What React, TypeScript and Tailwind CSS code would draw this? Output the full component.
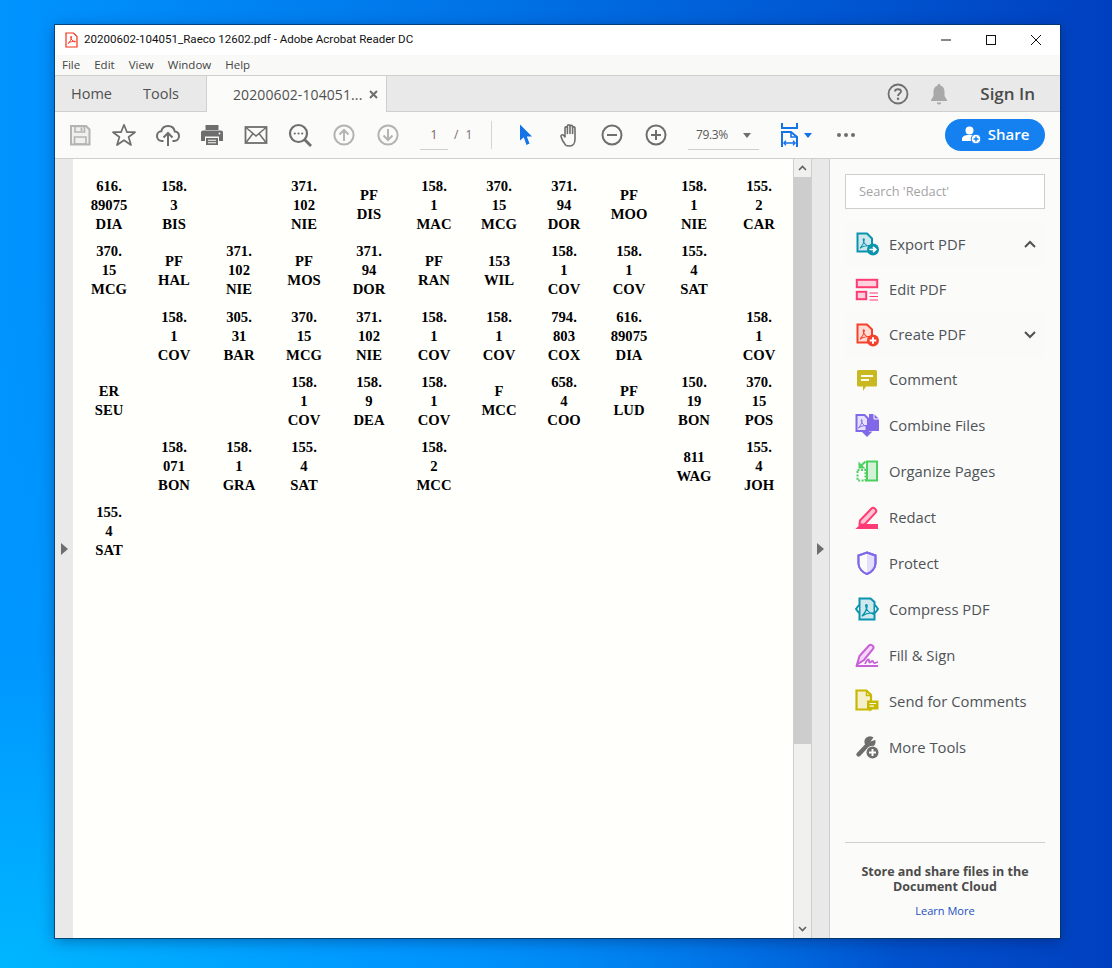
import type { ReactNode } from "react";

const UI = { fontFamily: '"Open Sans", "Noto Sans", sans-serif' };

const doc: string[][] = [
  ["616.|89075|DIA", "158.|3|BIS", "", "371.|102|NIE", "PF|DIS", "158.|1|MAC", "370.|15|MCG", "371.|94|DOR", "PF|MOO", "158.|1|NIE", "155.|2|CAR"],
  ["370.|15|MCG", "PF|HAL", "371.|102|NIE", "PF|MOS", "371.|94|DOR", "PF|RAN", "153|WIL", "158.|1|COV", "158.|1|COV", "155.|4|SAT", ""],
  ["", "158.|1|COV", "305.|31|BAR", "370.|15|MCG", "371.|102|NIE", "158.|1|COV", "158.|1|COV", "794.|803|COX", "616.|89075|DIA", "", "158.|1|COV"],
  ["ER|SEU", "", "", "158.|1|COV", "158.|9|DEA", "158.|1|COV", "F|MCC", "658.|4|COO", "PF|LUD", "150.|19|BON", "370.|15|POS"],
  ["", "158.|071|BON", "158.|1|GRA", "155.|4|SAT", "", "158.|2|MCC", "", "", "", "811|WAG", "155.|4|JOH"],
  ["155.|4|SAT"],
];

const Svg = ({ children, size = 24 }: { children: ReactNode; size?: number }) => (
  <svg width={size} height={size} viewBox="0 0 24 24" fill="none">
    {children}
  </svg>
);

const PdfMark = ({ color, x = 0, y = 0, s = 1 }: { color: string; x?: number; y?: number; s?: number }) => (
  <path
    transform={`translate(${x} ${y}) scale(${s})`}
    d="M2 12 C4 10 6 7 6.5 3 C6.6 1.5 5 1.5 5.2 3 C5.6 6 8 9.5 12 10.5 C13.5 10.8 13.5 9.4 12 9.4 C8 9.4 4 10.5 1.6 12.6"
    stroke={color}
    strokeWidth="1.2"
  />
);

const toolIcons: Record<string, ReactNode> = {
  export: (
    <Svg>
      <path d="M2.5 1.5H12L17 6.5V19.5H2.5Z" fill="#cfe8ee" stroke="#0a93ad" strokeWidth="2" />
      <PdfMark color="#0a93ad" x={3.5} y={5} s={0.9} />
      <circle cx="18" cy="17.5" r="6" fill="#0a93ad" />
      <path d="M14.5 17.5H20M18 15L20.8 17.5L18 20" stroke="#fff" strokeWidth="1.7" />
    </Svg>
  ),
  edit: (
    <Svg>
      <rect x="1.8" y="1.8" width="20.4" height="7.4" fill="#ffd0dd" stroke="#ff3b73" strokeWidth="2" />
      <rect x="1.8" y="13.8" width="9.4" height="7.4" fill="#ffd0dd" stroke="#ff3b73" strokeWidth="2" />
      <path d="M14.5 15H23M14.5 18.5H23M14.5 22H23" stroke="#ff3b73" strokeWidth="1.2" />
    </Svg>
  ),
  create: (
    <Svg>
      <path d="M2.5 1.5H12L17 6.5V19.5H2.5Z" fill="#ffdcd6" stroke="#f5402c" strokeWidth="2" />
      <PdfMark color="#f5402c" x={3.5} y={5} s={0.9} />
      <circle cx="18" cy="17.5" r="6" fill="#f5402c" />
      <path d="M18 14.2V20.8M14.7 17.5H21.3" stroke="#fff" strokeWidth="2" />
    </Svg>
  ),
  comment: (
    <Svg>
      <path d="M3.5 2H20.5Q22 2 22 3.5V17Q22 18.5 20.5 18.5H11L8 23V18.5H3.5Q2 18.5 2 17V3.5Q2 2 3.5 2Z" fill="#c9b81f" />
      <path d="M6 8H18M6 12H14" stroke="#fbfbf0" strokeWidth="1.8" />
    </Svg>
  ),
  combine: (
    <Svg>
      <path d="M1.5 2H9.5L13 5.5V18H1.5Z" fill="#e6e1fb" stroke="#8068e8" strokeWidth="2" />
      <PdfMark color="#8068e8" x={2} y={5} s={0.8} />
      <path d="M14 1H19L24 6V18H14Z" fill="#8068e8" />
      <path d="M19 1V6H24" stroke="#fff" strokeWidth="1" />
      <path d="M12 12V20" stroke="#8068e8" strokeWidth="3" />
      <path d="M6.5 18.5H17.5L12 24Z" fill="#8068e8" />
    </Svg>
  ),
  organize: (
    <Svg>
      <rect x="12" y="2.5" width="10" height="19" fill="#d4f2d8" stroke="#4cd060" strokeWidth="2" />
      <rect x="2.5" y="11" width="8" height="10.5" stroke="#4cd060" strokeWidth="2" strokeDasharray="2 1.4" />
      <path d="M10.5 2.5L6 6.8" stroke="#4cd060" strokeWidth="2" />
      <path d="M3.5 2.5V9.5H10.5Z" fill="#4cd060" />
    </Svg>
  ),
  redact: (
    <Svg>
      <path d="M5 15.5L16.5 3.5Q18 2 19.8 3.6L20.6 4.4Q22 6 20.6 7.6L9.5 19.5H4.5Z" fill="#ffc4d4" stroke="#ff3b73" strokeWidth="2" />
      <path d="M0.5 24L5.5 19H23V24Z" fill="#ff3b73" />
    </Svg>
  ),
  protect: (
    <Svg>
      <path d="M12 1.5L20.5 4.5V12.5C20.5 17.5 16 21.5 12 23C8 21.5 3.5 17.5 3.5 12.5V4.5Z" fill="#e3dffa" stroke="#8068e8" strokeWidth="2" />
      <path d="M12 2.5V22C8 21 4.5 17 4.5 12.5V5.2Z" fill="#fbfbf9" />
      <path d="M12 1.5L20.5 4.5V12.5C20.5 17.5 16 21.5 12 23C8 21.5 3.5 17.5 3.5 12.5V4.5Z" stroke="#8068e8" strokeWidth="2" />
    </Svg>
  ),
  compress: (
    <Svg>
      <path d="M4.5 1.5H15.5L19.5 5V22.5H4.5Z" fill="#cfe8ee" stroke="#0a93ad" strokeWidth="2" />
      <PdfMark color="#0a93ad" x={5} y={5.5} s={1.1} />
      <path d="M4 8L1 12L4 16M20 8L23 12L20 16" stroke="#0a93ad" strokeWidth="2" fill="#fbfbf9" />
    </Svg>
  ),
  fill: (
    <Svg>
      <path d="M2 21.5L4.5 13L14 2.5Q15.5 1 17 2.3L17.8 3Q19.2 4.4 18 6L9 17Z" fill="#f4d8f8" stroke="#c860d8" strokeWidth="2" />
      <path d="M1 23H23M10 21C12 16 14.5 15 14 18C14 21 16 19 17 18C18 17 18.5 21 20 20L23 19" stroke="#c860d8" strokeWidth="1.8" />
    </Svg>
  ),
  send: (
    <Svg>
      <path d="M1.5 1.5H11.5L16 6V20.5H1.5Z" fill="#f4f0cc" stroke="#c8b800" strokeWidth="2.2" />
      <path d="M11.5 1.5V6.5H16" stroke="#c8b800" strokeWidth="1.5" />
      <path d="M12 11.5H23.5V20.5H16L14.5 23V20.5H12Z" fill="#c8b800" />
      <path d="M14.5 14.5H21M14.5 17.2H19" stroke="#fbfbf0" strokeWidth="1.2" />
    </Svg>
  ),
  more: (
    <Svg>
      <path d="M3.5 19.5L13 9.5" stroke="#6e6e6e" strokeWidth="4.4" strokeLinecap="round" />
      <circle cx="15" cy="6.8" r="5.6" fill="#6e6e6e" />
      <path d="M15.5 6.5L20 0.5H23V4Z" fill="#fbfbf9" />
      <circle cx="17.5" cy="17.5" r="6.8" fill="#fbfbf9" />
      <circle cx="17.5" cy="17.5" r="6" fill="#6e6e6e" />
      <path d="M17.5 14V21M14 17.5H21" stroke="#fff" strokeWidth="1.9" />
    </Svg>
  ),
};

const tools = [
  { key: "export", label: "Export PDF", h: "h-[46px]", chevron: "up" },
  { key: "edit", label: "Edit PDF", h: "h-[45px]" },
  { key: "create", label: "Create PDF", h: "h-[45px]", chevron: "down" },
  { key: "comment", label: "Comment", h: "h-[45px]" },
  { key: "combine", label: "Combine Files", h: "h-[46px]" },
  { key: "organize", label: "Organize Pages", h: "h-[46px]" },
  { key: "redact", label: "Redact", h: "h-[46px]" },
  { key: "protect", label: "Protect", h: "h-[46px]" },
  { key: "compress", label: "Compress PDF", h: "h-[46px]" },
  { key: "fill", label: "Fill & Sign", h: "h-[46px]" },
  { key: "send", label: "Send for Comments", h: "h-[46px]" },
  { key: "more", label: "More Tools", h: "h-[46px]" },
];

const G = "#6e6e6e";
const L = "#b4b4b4";

const Slot = ({ children, w = "w-11" }: { children: ReactNode; w?: string }) => (
  <div className={`${w} h-full flex items-center justify-center shrink-0`}>{children}</div>
);

const CircleArrow = ({ dir }: { dir: "up" | "down" }) => (
  <Svg>
    <circle cx="12" cy="12" r="9.6" stroke={L} strokeWidth="2" />
    {dir === "up" ? (
      <path d="M12 18V7M7.5 11.5L12 7L16.5 11.5" stroke={L} strokeWidth="2" />
    ) : (
      <path d="M12 6V17M7.5 12.5L12 17L16.5 12.5" stroke={L} strokeWidth="2" />
    )}
  </Svg>
);

const Toolbar = () => (
  <div className="h-[47px] flex items-center pl-[3px] bg-[#fbfbf9] border-b border-[#cfcfcd] shrink-0">
    <Slot>
      <Svg>
        <path d="M3 3H18L21.5 6.5V21.5H3Z" fill="#f0f0ee" stroke={L} strokeWidth="2" />
        <path d="M7 3.5H16.5V9H7Z" stroke={L} strokeWidth="1.6" />
        <path d="M13.5 4.5V8" stroke={L} strokeWidth="1.8" />
        <path d="M6.5 14H18V21H6.5Z" stroke={L} strokeWidth="1.6" />
      </Svg>
    </Slot>
    <Slot>
      <Svg>
        <path d="M12 1.8L15 9.2H23L16.6 14L19 22L12 17.2L5 22L7.4 14L1 9.2H9Z" stroke={G} strokeWidth="1.7" strokeLinejoin="round" />
      </Svg>
    </Slot>
    <Slot>
      <Svg>
        <path d="M7.5 18H6C3 18 1 15.8 1 13C1 10.5 3 8.5 5.3 8.3C6 5 8.8 3 12 3C15.5 3 18.2 5.3 18.8 8.5C21.2 8.8 23 10.6 23 13C23 15.8 21 18 18 18H16.5" stroke={G} strokeWidth="2" />
        <path d="M12 23V10.5M7.5 14.5L12 10L16.5 14.5" stroke={G} strokeWidth="2" />
      </Svg>
    </Slot>
    <Slot>
      <Svg>
        <path d="M5.5 7V2H18.5V7Z" fill={G} />
        <path d="M3 7.5H21Q23 7.5 23 9.5V18H19V13.5H5V18H1V9.5Q1 7.5 3 7.5Z" fill={G} />
        <path d="M6 15H18V22H6Z" fill={G} />
        <path d="M8 17.3H16M8 19.7H16" stroke="#fbfbf9" strokeWidth="1.1" />
        <circle cx="19.5" cy="10.5" r="0.9" fill="#fbfbf9" />
      </Svg>
    </Slot>
    <Slot>
      <Svg>
        <rect x="1.5" y="4" width="21" height="16" stroke={G} strokeWidth="1.8" />
        <path d="M2 4.5L12 13L22 4.5M2 19.5L9 10.5M22 19.5L15 10.5" stroke={G} strokeWidth="1.5" />
      </Svg>
    </Slot>
    <Slot>
      <Svg>
        <circle cx="10.5" cy="10.5" r="8.5" stroke={G} strokeWidth="2.2" />
        <path d="M16.5 16.5L23 23" stroke={G} strokeWidth="2.8" />
        <circle cx="6.8" cy="10.5" r="1.1" fill={G} />
        <circle cx="10.5" cy="10.5" r="1.1" fill={G} />
        <circle cx="14.2" cy="10.5" r="1.1" fill={G} />
      </Svg>
    </Slot>
    <Slot>
      <CircleArrow dir="up" />
    </Slot>
    <Slot>
      <CircleArrow dir="down" />
    </Slot>
    <div className="ml-[10px] w-[28px] h-[29px] border-b border-[#cfcfcd] text-center text-[12px] leading-[28px] text-[#7a5a6a] mt-[1px]">1</div>
    <div className="ml-[6px] text-[12px] text-[#7a6a70] w-[31px] tracking-[2px]">/ 1</div>
    <div className="ml-[6px] w-px h-[28px] bg-[#d4d4d2]" />
    <div className="w-[11px]" />
    <Slot>
      <Svg>
        <path d="M7 1.5V17.5L10.8 14.2L13.5 22L16.5 20.5L13.8 13.5H19Z" fill="#1473e6" />
      </Svg>
    </Slot>
    <Slot w="w-[43px]">
      <Svg>
        <path
          d="M6.5 22C4.8 20 2.5 15.5 2 13.5C1.6 12 3.5 11 4.8 12.5L6 14V5C6 3.5 8.2 3.5 8.4 5V10.5V3C8.4 1.3 11 1.3 11 3V10.5V3.5C11 2 13.6 2 13.6 3.5V10.5V5C13.6 3.5 16 3.5 16 5V16C16 20 14 23 11 23C9 23 7.5 23 6.5 22Z"
          transform="translate(2 0)"
          fill="#fbfbf9"
          stroke={G}
          strokeWidth="1.6"
          strokeLinejoin="round"
        />
      </Svg>
    </Slot>
    <Slot>
      <Svg>
        <circle cx="12" cy="12" r="9.5" stroke={G} strokeWidth="2" />
        <path d="M7 12H17" stroke={G} strokeWidth="2" />
      </Svg>
    </Slot>
    <Slot>
      <Svg>
        <circle cx="12" cy="12" r="9.5" stroke={G} strokeWidth="2" />
        <path d="M7 12H17M12 7V17" stroke={G} strokeWidth="2" />
      </Svg>
    </Slot>
    <div className="ml-[10px] w-[71px] h-[29px] border-b border-[#cfcfcd] flex items-center justify-between pl-[8px] pr-[8px] text-[12px] text-[#5a5a5a] mt-[1px] tracking-[-0.4px]">
      <span>79.3%</span>
      <span className="w-0 h-0 border-l-[4px] border-r-[4px] border-t-[5px] border-l-transparent border-r-transparent border-t-[#6e6e6e]" />
    </div>
    <div className="w-[21px]" />
    <Svg>
      <path d="M2 0V5H17V0" stroke="#1473e6" strokeWidth="2" />
      <path d="M2 24V9H11L17 14V24" stroke="#1473e6" strokeWidth="2" />
      <path d="M11 9V14H17" stroke="#1473e6" strokeWidth="1.6" />
      <path d="M4 20H15M6 17.8L3.8 20L6 22.2M13 17.8L15.2 20L13 22.2" stroke="#1473e6" strokeWidth="1.3" />
    </Svg>
    <span className="w-0 h-0 border-l-[4px] border-r-[4px] border-t-[5px] border-l-transparent border-r-transparent border-t-[#1473e6]" />
    <div className="ml-[25px] flex gap-[3px]">
      <span className="size-[4px] rounded-full bg-[#6e6e6e]" />
      <span className="size-[4px] rounded-full bg-[#6e6e6e]" />
      <span className="size-[4px] rounded-full bg-[#6e6e6e]" />
    </div>
    <div className="ml-[90px] w-[100px] h-[32px] rounded-full bg-[#1580f0] flex items-center justify-center gap-[5px] text-white text-[15px] font-semibold">
      <svg width="22" height="20" viewBox="0 0 22 20" fill="none">
        <circle cx="8.5" cy="5.5" r="4" fill="#fff" />
        <path d="M1 16V14C1 11.5 3.5 10 8.5 10C11 10 12.5 10.5 13 11V16Z" fill="#fff" />
        <circle cx="15" cy="14" r="4.8" fill="#fff" stroke="#1580f0" strokeWidth="1" />
        <path d="M15 11.5V16.5M12.5 14H17.5" stroke="#1580f0" strokeWidth="1.4" />
      </svg>
      <span className="mb-[2px]">Share</span>
    </div>
  </div>
);

const Tabs = () => (
  <div className="h-[36px] flex bg-[#e9e9e9] border-b border-[#cfcfcd] shrink-0 text-[14.5px] text-[#505050]">
    <div className="flex items-center w-[151px] pl-[16px] gap-[31px]">
      <span>Home</span>
      <span>Tools</span>
    </div>
    <div className="h-[36px] w-[181px] bg-[#fbfbf9] border-x border-[#cfcfcd] flex items-center pl-[26px] text-[14px] whitespace-nowrap">
      <span className="tracking-[0.1px]">20200602-104051...</span>
      <svg className="ml-[7px]" width="9" height="9" viewBox="0 0 9 9">
        <path d="M1 1L8 8M8 1L1 8" stroke="#6e6e6e" strokeWidth="2" />
      </svg>
    </div>
    <div className="flex-1 flex items-center justify-end pr-[25px]">
      <svg className="mr-[21px]" width="22" height="22" viewBox="0 0 22 22" fill="none">
        <circle cx="11" cy="11" r="9.5" stroke={G} strokeWidth="1.8" />
        <path d="M8 8.5C8 5.5 14 5.5 14 8.5C14 10.5 11 10.5 11 13" stroke={G} strokeWidth="1.8" />
        <circle cx="11" cy="15.8" r="1.2" fill={G} />
      </svg>
      <svg className="mr-[32px]" width="18" height="22" viewBox="0 0 18 22" fill="none">
        <path d="M9 1C10 1 10.5 1.7 10.5 2.6C13.5 3.5 14.5 6 14.5 9V13L17 17V18H1V17L3.5 13V9C3.5 6 4.5 3.5 7.5 2.6C7.5 1.7 8 1 9 1Z" fill="#a8a8a8" />
        <path d="M6.8 19.5H11.2C11 21 10 21.5 9 21.5C8 21.5 7 21 6.8 19.5Z" fill="#a8a8a8" />
      </svg>
      <span className="font-semibold text-[17px] text-[#4b4b4b]">Sign In</span>
    </div>
  </div>
);

const Cell = ({ text }: { text: string }) => (
  <div className="flex flex-col items-center justify-center text-center">
    {text.split("|").map((line, i) => (
      <div key={i}>{line || "\u00a0"}</div>
    ))}
  </div>
);

const Triangle = () => (
  <span className="w-0 h-0 border-y-[6px] border-l-[7px] border-y-transparent border-l-[#6e6e6e]" />
);

const App = () => {
  return (
    <div
      className="w-[1112px] h-[968px] overflow-hidden pl-[55px] pt-[25px] bg-[radial-gradient(ellipse_900px_700px_at_0%_100%,#00b6ff_0%,#0096ff_45%,rgba(0,128,240,0)_100%),linear-gradient(90deg,#0094ff_0%,#0072e6_45%,#0040c0_100%)]"
      style={UI}
    >
      <div className="w-[1005px] h-[913px] flex flex-col bg-[#fbfbf9] shadow-[0_0_0_1px_rgba(5,50,90,0.75),0_3px_14px_rgba(0,20,70,0.4)]">
        {/* title bar */}
        <div className="h-[30px] bg-white flex items-center shrink-0 text-[11.55px] text-[#111]">
          <svg className="ml-[10px]" width="13" height="16" viewBox="0 0 13 16" fill="none">
            <path d="M1 1H8.5L12 4.5V15H1Z" fill="#fff" stroke="#f5301c" strokeWidth="1.2" />
            <path d="M3 11.5C5 10 6.5 7 6.5 5C6.5 4 5.6 4 5.6 5C5.8 7 7.5 9.5 10 10C10.8 10 10.8 9.2 10 9.2C7.5 9.2 4.5 10 3 11.5Z" stroke="#f5301c" strokeWidth="0.9" />
          </svg>
          <span className="ml-[6px] whitespace-nowrap" style={{ fontFamily: 'Roboto, sans-serif' }}>
            20200602-104051_Raeco 12602.pdf - Adobe Acrobat Reader DC
          </span>
          <div className="ml-auto flex items-center mb-[1px]">
            <svg className="mr-[35px]" width="10" height="10" viewBox="0 0 10 10">
              <path d="M0 5H10" stroke="#111" strokeWidth="1" />
            </svg>
            <svg className="mr-[35px]" width="10" height="10" viewBox="0 0 10 10" fill="none">
              <rect x="0.5" y="0.5" width="9" height="9" stroke="#111" strokeWidth="1" />
            </svg>
            <svg className="mr-[19px]" width="10" height="10" viewBox="0 0 10 10">
              <path d="M0 0L10 10M10 0L0 10" stroke="#111" strokeWidth="1" />
            </svg>
          </div>
        </div>
        {/* menu */}
        <div className="h-[20px] bg-[#f9f9f7] border-b border-[#cfcfcd] box-content flex items-center pl-[7px] gap-[14px] text-[11.5px] text-[#444] shrink-0">
          <span>File</span>
          <span>Edit</span>
          <span>View</span>
          <span>Window</span>
          <span>Help</span>
        </div>
        <Tabs />
        <Toolbar />
        {/* body */}
        <div className="flex-1 flex min-h-0">
          <div className="w-[18px] bg-[#e9e9e9] flex items-center justify-center shrink-0">
            <Triangle />
          </div>
          <div className="w-[720px] bg-[#fffffc] pl-[3.5px] pt-[13.7px] shrink-0" style={{ fontFamily: '"Liberation Serif", serif' }}>
            <div className="grid grid-cols-[repeat(11,65px)] auto-rows-[65.33px] text-[14.67px] leading-[19px] font-bold text-black">
              {doc.flatMap((row, r) => row.map((text, c) => <Cell key={`${r}-${c}`} text={text} />))}
            </div>
          </div>
          {/* scrollbar */}
          <div className="w-[18px] border-l border-[#cfcfcd] bg-[#f0f0ee] flex flex-col shrink-0">
            <div className="h-[18px] flex items-center justify-center">
              <svg width="9" height="6" viewBox="0 0 9 6" fill="none">
                <path d="M1 5L4.5 1.5L8 5" stroke="#606060" strokeWidth="1.6" />
              </svg>
            </div>
            <div className="h-[567px] bg-[#cdcdcd]" />
            <div className="flex-1" />
            <div className="h-[18px] flex items-center justify-center">
              <svg width="9" height="6" viewBox="0 0 9 6" fill="none">
                <path d="M1 1L4.5 4.5L8 1" stroke="#606060" strokeWidth="1.6" />
              </svg>
            </div>
          </div>
          <div className="w-[19px] border-x border-[#cfcfcd] bg-[#e9e9e9] flex items-center justify-center shrink-0">
            <Triangle />
          </div>
          {/* tools pane */}
          <div className="flex-1 flex flex-col px-[15px] pt-[15px] bg-[#fbfbf9]">
            <div className="h-[35px] border border-[#cfcfcd] bg-white flex items-center pl-[13px] pt-[1px] text-[12.8px] text-[#a4a4a4] shrink-0">
              Search 'Redact'
            </div>
            <div className="mt-[12px] flex flex-col">
              {tools.map((t) => (
                <div key={t.key} className={`${t.h} flex items-center pl-[10px] pr-[9px] text-[14.8px] text-[#4f5358] ${t.chevron ? "bg-[#fafaf8]" : ""}`}>
                  {toolIcons[t.key]}
                  <span className="ml-[10px]">{t.label}</span>
                  {t.chevron && (
                    <svg className="ml-auto" width="12" height="8" viewBox="0 0 12 8" fill="none">
                      <path d={t.chevron === "up" ? "M1 7L6 2L11 7" : "M1 1L6 6L11 1"} stroke="#505050" strokeWidth="2" />
                    </svg>
                  )}
                </div>
              ))}
            </div>
            <div className="mt-auto h-[96px] border-t border-[#cfcfcd] text-center pt-[21px] shrink-0">
              <div className="text-[12.5px] leading-[15px] font-bold text-[#4b4b4b]">
                Store and share files in the
                <br />
                Document Cloud
              </div>
              <div className="mt-[9px] text-[11px] leading-[15px] text-[#2050c0]">Learn More</div>
            </div>
          </div>
        </div>
      </div>
    </div>
  );
};

export default App;
